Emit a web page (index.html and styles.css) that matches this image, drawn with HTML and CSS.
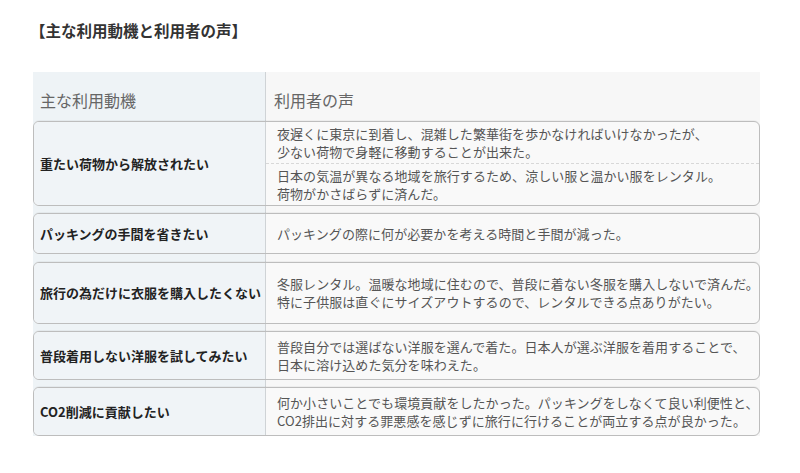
FILE: index.html
```html
<!DOCTYPE html>
<html lang="ja">
<head>
<meta charset="utf-8">
<title>主な利用動機と利用者の声</title>
<link rel="stylesheet" href="styles.css">
</head>
<body>
<div class="page">
  <h2 class="title">【主な利用動機と利用者の声】</h2>
  <div class="table">
    <div class="head">
      <div class="head-cell head-left">主な利用動機</div>
      <div class="head-cell head-right">利用者の声</div>
    </div>
    <div class="row row-1">
      <div class="motive">重たい荷物から解放されたい</div>
      <div class="voices">
        <div class="voice">夜遅くに東京に到着し、混雑した繁華街を歩かなければいけなかったが、<br>少ない荷物で身軽に移動することが出来た。</div>
        <div class="voice voice-sep">日本の気温が異なる地域を旅行するため、涼しい服と温かい服をレンタル。<br>荷物がかさばらずに済んだ。</div>
      </div>
    </div>
    <div class="row row-2">
      <div class="motive">パッキングの手間を省きたい</div>
      <div class="voices">
        <div class="voice">パッキングの際に何が必要かを考える時間と手間が減った。</div>
      </div>
    </div>
    <div class="row row-3">
      <div class="motive">旅行の為だけに衣服を購入したくない</div>
      <div class="voices">
        <div class="voice">冬服レンタル。温暖な地域に住むので、普段に着ない冬服を購入しないで済んだ。<br>特に子供服は直ぐにサイズアウトするので、レンタルできる点ありがたい。</div>
      </div>
    </div>
    <div class="row row-4">
      <div class="motive">普段着用しない洋服を試してみたい</div>
      <div class="voices">
        <div class="voice">普段自分では選ばない洋服を選んで着た。日本人が選ぶ洋服を着用することで、<br>日本に溶け込めた気分を味わえた。</div>
      </div>
    </div>
    <div class="row row-5">
      <div class="motive">CO2削減に貢献したい</div>
      <div class="voices">
        <div class="voice">何か小さいことでも環境貢献をしたかった。パッキングをしなくて良い利便性と、<br>CO2排出に対する罪悪感を感じずに旅行に行けることが両立する点が良かった。</div>
      </div>
    </div>
  </div>
</div>
</body>
</html>
```

FILE: styles.css
```css
* {
  box-sizing: border-box;
}

html, body {
  margin: 0;
  padding: 0;
  background: #ffffff;
}

body {
  font-family: "Noto Sans CJK JP", "Noto Sans", sans-serif;
  color: #333333;
}

.page {
  padding: 20px 0 0 33px;
  width: 800px;
}

.title {
  margin: 0 0 32px -3px;
  font-size: 15.5px;
  line-height: 20px;
  font-weight: 700;
  color: #333333;
}

.table {
  width: 727px;
  display: flex;
  flex-direction: column;
  gap: 7px;
  background: linear-gradient(to right, #eef3f6 0, #eef3f6 232px, #cfd3d6 232px, #cfd3d6 233px, #f7f7f7 233px, #f7f7f7 100%);
}

.head {
  display: flex;
  height: 49px;
  margin-bottom: -7px;
}

.head-cell {
  font-size: 16px;
  line-height: 24px;
  color: #666666;
  padding-top: 16px;
}

.head-left {
  width: 233px;
  padding-left: 7px;
}

.head-right {
  flex: 1;
  padding-left: 8px;
}

.row {
  display: flex;
  border: 1px solid #bdbdbd;
  border-radius: 6px;
  box-shadow: 0 -1px 0 rgba(0, 0, 0, 0.04);
  background: #f9f9f9;
}

.row-1 { height: 85px; }
.row-2 { height: 41px; }
.row-3 { height: 62px; margin-top: 1px; }
.row-4 { height: 49px; }
.row-5 { height: 49px; }

.motive {
  width: 232px;
  flex: none;
  display: flex;
  align-items: center;
  padding-left: 6px;
  background: #f0f4f7;
  border-right: 1px solid #cfd3d6;
  border-radius: 5px 0 0 5px;
  font-size: 13px;
  line-height: 18px;
  font-weight: 700;
  color: #222222;
  white-space: nowrap;
}

.voices {
  flex: 1;
  display: flex;
  flex-direction: column;
}

.voice {
  flex: 1;
  display: flex;
  flex-direction: column;
  justify-content: center;
  padding: 0 0 0 11px;
  font-size: 13px;
  line-height: 18px;
  letter-spacing: 0.06px;
  color: #555555;
  white-space: nowrap;
}

.voice-sep {
  border-top: 1px dashed #d8d8d8;
}
```
